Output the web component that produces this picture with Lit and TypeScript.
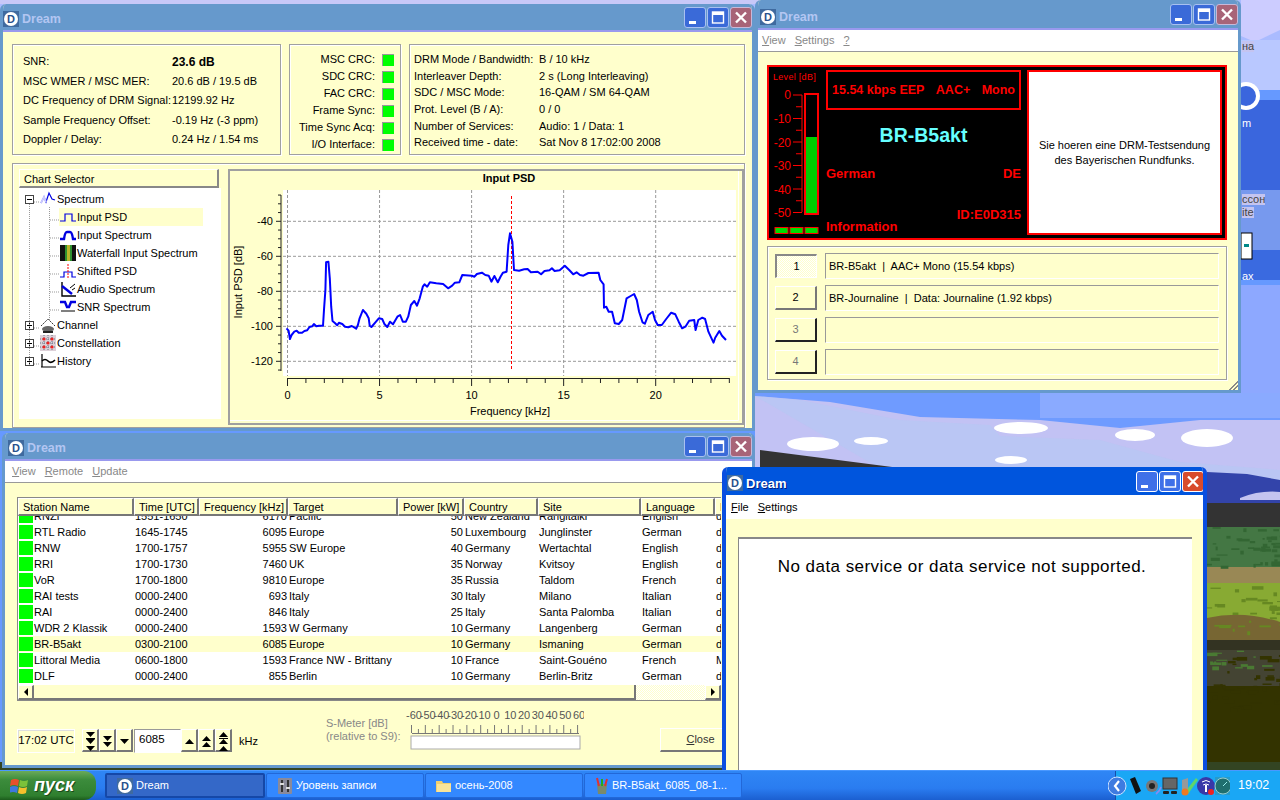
import { LitElement, html, css, svg } from 'lit';
import { customElement } from 'lit/decorators.js';

// spectrum trace, read off the reference in plot pixels
const TRACE = [[182,490],[188,497],[192,522],[197,510],[205,500],[212,497],[218,503],[228,503],[235,498],[243,496],[250,486],[258,484],[263,477],[270,484],[278,482],[290,482],[293,430],[297,375],[299,292],[306,290],[310,340],[314,425],[318,468],[325,474],[332,481],[337,473],[347,477],[355,485],[365,487],[375,483],[388,491],[393,480],[398,460],[408,435],[418,446],[425,460],[428,482],[433,486],[445,472],[455,460],[465,462],[472,478],[480,486],[488,470],[497,478],[510,455],[518,450],[526,470],[535,470],[542,455],[550,420],[560,408],[568,422],[576,400],[585,365],[590,358],[598,365],[606,352],[625,355],[645,357],[660,370],[672,362],[680,353],[693,352],[702,330],[730,332],[738,335],[745,327],[760,323],[770,330],[780,332],[788,350],[797,333],[807,352],[815,335],[822,323],[833,320],[838,240],[843,205],[850,230],[855,315],[870,317],[885,313],[895,312],[905,322],[925,320],[935,328],[945,318],[960,316],[967,310],[975,318],[990,316],[1005,302],[1018,315],[1030,328],[1040,322],[1050,330],[1060,332],[1075,324],[1105,323],[1110,345],[1120,358],[1121,428],[1128,425],[1135,440],[1145,440],[1153,475],[1165,477],[1175,465],[1188,400],[1200,393],[1210,387],[1218,405],[1225,440],[1235,472],[1242,476],[1252,450],[1265,440],[1272,465],[1280,480],[1292,480],[1305,462],[1320,443],[1332,448],[1342,470],[1352,490],[1362,485],[1373,467],[1388,465],[1392,495],[1400,465],[1412,458],[1420,462],[1430,500],[1445,533],[1450,518],[1462,498],[1470,512],[1482,525]];

const STATIONS = [
  ['RNZI', '1551-1650', '6170', 'Pacific', '50', 'New Zealand', 'Rangitaiki', 'English', 'd'],
  ['RTL Radio', '1645-1745', '6095', 'Europe', '50', 'Luxembourg', 'Junglinster', 'German', 'd'],
  ['RNW', '1700-1757', '5955', 'SW Europe', '40', 'Germany', 'Wertachtal', 'English', 'd'],
  ['RRI', '1700-1730', '7460', 'UK', '35', 'Norway', 'Kvitsoy', 'English', 'd'],
  ['VoR', '1700-1800', '9810', 'Europe', '35', 'Russia', 'Taldom', 'French', 'd'],
  ['RAI tests', '0000-2400', '693', 'Italy', '30', 'Italy', 'Milano', 'Italian', 'd'],
  ['RAI', '0000-2400', '846', 'Italy', '25', 'Italy', 'Santa Palomba', 'Italian', 'd'],
  ['WDR 2 Klassik', '0000-2400', '1593', 'W Germany', '10', 'Germany', 'Langenberg', 'German', 'd'],
  ['BR-B5akt', '0300-2100', '6085', 'Europe', '10', 'Germany', 'Ismaning', 'German', 'd'],
  ['Littoral Media', '0600-1800', '1593', 'France NW - Brittany', '10', 'France', 'Saint-Gouéno', 'French', 'M'],
  ['DLF', '0000-2400', '855', 'Berlin', '10', 'Germany', 'Berlin-Britz', 'German', 'd'],
];

const HEADERS = ['Station Name', 'Time [UTC]', 'Frequency [kHz]', 'Target', 'Power [kW]', 'Country', 'Site', 'Language', 'D'];

const logo = () => html`<svg class="logo" width="16" height="16" viewBox="0 0 16 16">
  <rect width="16" height="16" fill="#3f6a9f"/>
  <circle cx="8" cy="8" r="7" fill="#fff"/>
  <text x="8" y="12" text-anchor="middle" font-family="Liberation Sans" font-weight="700" font-size="11" fill="#28508c">D</text>
</svg>`;

const titleBtn = (kind: string) => html`<span class="tb ${kind}">
  <svg width="20" height="19" viewBox="0 0 20 19">
    ${kind === 'min' ? svg`<rect x="4" y="13" width="7" height="3" fill="#fff"/>` : ''}
    ${kind === 'max' ? svg`<rect x="4.5" y="4" width="11" height="11" fill="none" stroke="#fff" stroke-width="1.4"/><rect x="4.5" y="4" width="11" height="3" fill="#fff"/>` : ''}
    ${kind === 'close' ? svg`<path d="M5 4.5l10 10M15 4.5l-10 10" stroke="#fff" stroke-width="2.4"/>` : ''}
  </svg>
</span>`;

const titleBar = () => html`<div class="title">
  ${logo()}<span class="title-text">Dream</span>
  <span class="tbs">${titleBtn('min')}${titleBtn('max')}${titleBtn('close')}</span>
</div>`;

const blue = '#0000e0';
const treeIcons: Record<string, unknown> = {
  spectrum: svg`<path d="M1 12l3-6 2 5 3-9 3 6 3 1" fill="none" stroke="${blue}" stroke-width="1.2"/><path d="M1 12l3-6 2 5" fill="none" stroke="#c9c9ff" stroke-width="2"/>`,
  psd: svg`<path d="M0 12h5v-7h7v7h4" fill="none" stroke="${blue}" stroke-width="1.2"/>`,
  inspec: svg`<path d="M0 12h4q1-7 3-7h3q2 0 3 7h3" fill="none" stroke="${blue}" stroke-width="2.4"/>`,
  waterfall: svg`<rect width="16" height="16" fill="#111"/><rect x="5" y="0" width="7" height="16" fill="#2f8f2f"/><rect x="7" y="0" width="3" height="16" fill="#b9b32a"/>`,
  shifted: svg`<path d="M0 14h4v-5h8v5h4" fill="none" stroke="${blue}" stroke-width="1.2"/><path d="M8 1v15" stroke="#f00" stroke-dasharray="2 1"/>`,
  audio: svg`<path d="M2 1v14h14" fill="none" stroke="#000" stroke-width="1.4"/><path d="M2 5l10 8" stroke="${blue}" stroke-width="2.4"/><path d="M10 7l5-4M12 9l3-2" stroke="#000"/>`,
  snr: svg`<path d="M0 3h5l2 5h2l2-5h5" fill="none" stroke="${blue}" stroke-width="2.4"/><path d="M1 12h14" stroke="#000"/>`,
  channel: svg`<path d="M1 9l7-7 7 7" fill="none" stroke="#333" stroke-dasharray="2 1"/><ellipse cx="8" cy="12" rx="6" ry="3" fill="#666"/><rect x="3" y="14" width="10" height="2" fill="#222"/>`,
  constellation: svg`<rect width="16" height="16" fill="#ddd0d8"/><path d="M0 4h16M0 8h16M0 12h16M4 0v16M8 0v16M12 0v16" stroke="#678" stroke-dasharray="1 1"/><circle cx="4" cy="4" r="1.6" fill="#e22"/><circle cx="12" cy="4" r="1.6" fill="#e22"/><circle cx="4" cy="12" r="1.6" fill="#e22"/><circle cx="12" cy="12" r="1.6" fill="#e22"/><circle cx="8" cy="8" r="1.6" fill="#e22"/>`,
  history: svg`<path d="M2 1v13M1 14h15" fill="none" stroke="#000" stroke-width="1.2"/><path d="M2 8q3-3 6 0t7-1" fill="none" stroke="#000" stroke-width="1.6"/>`,
};

const icon = (name: string) => html`<svg class="ti" width="16" height="16" viewBox="0 0 16 16">${treeIcons[name]}</svg>`;

const expander = (open: boolean) => html`<svg class="exp" width="9" height="9" viewBox="0 0 9 9">
  <rect x=".5" y=".5" width="8" height="8" fill="#fff" stroke="#444"/>
  <path d="M2 4.5h5${open ? '' : 'M4.5 2v5'}" stroke="#000"/>
</svg>`;

const stepBtn = (dir: 'up' | 'down', count: number) => {
  const tri = (y: number) => dir === 'up'
    ? svg`<path d="M3 ${y + 5}h9l-4.5-5z" fill="#000"/>`
    : svg`<path d="M3 ${y}h9l-4.5 5z" fill="#000"/>`;
  const ys = count === 1 ? [9] : count === 2 ? [6, 12] : [2, 9, 16];
  return html`<span class="step"><svg width="15" height="21" viewBox="0 0 15 21">
    ${ys.map(tri)}
    ${count === 3 ? svg`<rect x="3" y="8" width="9" height="1" fill="#000"/>` : ''}
  </svg></span>`;
};

// pixel-noise for the meadow below the hills
function noise(seed: number, n: number, x: number, y: number, w: number, h: number, fill: string) {
  let s = seed;
  const rnd = () => (s = (s * 16807) % 2147483647) / 2147483647;
  const out = [];
  for (let i = 0; i < n; i++) {
    out.push(svg`<rect x="${x + rnd() * w}" y="${y + rnd() * h}" width="${2 + rnd() * 10}" height="${1 + rnd() * 3}" fill="${fill}"/>`);
  }
  return out;
}

@customElement('app-root')
export class AppRoot extends LitElement {
  static styles = css`
    :host {
      display: block;
      position: relative;
      width: 1280px;
      height: 800px;
      overflow: hidden;
      font-family: "Liberation Sans", Arial, sans-serif;
      font-size: 11px;
      color: #000;
      background: #6699ff;
      line-height: 1;
    }
    * { box-sizing: border-box; }
    .wall { position: absolute; inset: 0; }
    .dt-label { position: absolute; left: 1242px; color: #fff; font-size: 11px; }
    .dt-label.light { color: #444; background: #c4c4f0; }

    .win {
      position: absolute;
      display: flex;
      flex-direction: column;
      background: #ffffcc;
      border: 3px solid #6699cc;
      border-top: 0;
      overflow: hidden;
      border-radius: 6px 6px 0 0;
    }
    .title {
      height: 28px;
      flex: none;
      display: flex;
      align-items: center;
      gap: 3px;
      background: #6699cc;
      border-bottom: 2px solid #9999ee;
      margin: 0 -3px;
      padding: 4px 0 0 3px;
      color: #b3c6f2;
    }
    .title-text { font: 700 12.5px "Liberation Sans", sans-serif; }
    .tbs { margin-left: auto; display: flex; gap: 1px; padding-right: 3px; margin-top: -4px; }
    .tb { width: 22px; height: 21px; border: 1px solid #a8c0f0; border-radius: 3px; background: #3a6ad8; display: block; }
    .tb svg { display: block; }
    .tb.close { background: #a86478; border-color: #c8b8d8; }

    .menu {
      height: 22px;
      flex: none;
      background: #fff;
      border-bottom: 1px solid #999;
      display: flex;
      align-items: center;
      gap: 9px;
      color: #888;
    }
    .panel {
      background: #ffffcc;
      border: 1px solid #a0a0a0;
      box-shadow: inset 1px 1px #fff, 1px 1px #fff;
    }

    /* main window */
    .main { left: 0; top: 4px; width: 755px; height: 427px; }
    .main .client { padding: 12px 0 0 9px; display: flex; flex-direction: column; gap: 8px; }
    .top-row { display: flex; gap: 8px; height: 111px; }
    .snr { width: 269px; padding: 11px 0 0 10px; display: grid; grid-template-columns: 149px 1fr; grid-auto-rows: 19.5px; }
    .snr b { font-weight: 700; font-size: 12px; }
    .crc { width: 112px; padding: 6px 6px 0 0; display: grid; grid-template-columns: 1fr 12px; grid-auto-rows: 17px; column-gap: 7px; text-align: right; align-items: center; }
    .led { width: 12px; height: 12px; background: #00ff00; border-top: 1px solid #999; border-left: 1px solid #999; }
    .params { width: 336px; padding: 9px 0 0 4px; display: grid; grid-template-columns: 125px 1fr; grid-auto-rows: 16.7px; }
    .chart-panel { width: 733px; height: 265px; display: flex; gap: 7px; padding: 5px 0 0 6px; }
    .tree-wrap { width: 202px; height: 250px; background: #fff; position: relative; }
    .tree-head {
      height: 19px;
      width: 200px;
      background: #ffffcc;
      border: 1px solid #888;
      border-top-color: #fff;
      border-left-color: #fff;
      border-right-width: 2px;
      border-bottom-width: 2px;
      padding: 4px 0 0 4px;
    }
    .tree-bar { background: #ffffcc; height: 19px; }
    .tree-rows { padding-top: 2px; }
    .tree-row { height: 18px; display: flex; align-items: center; }
    .tree-row .exp { margin: 0 6px 0 6px; }
    .tree-row.child { padding-left: 41px; }
    .tree-row.sel { background: linear-gradient(#ffffcc, #ffffcc) 40px 0 / 144px 100% no-repeat; }
    .ti { flex: none; margin-right: 1px; }
    .guides { position: absolute; left: 0; top: 0; pointer-events: none; }
    .chart-frame { width: 516px; height: 256px; background: #ffffcc; border: 2px solid #a0a0a0; flex: none; overflow: hidden; }
    .chart-frame svg { display: block; }

    /* evaluation window */
    .eval { left: 755px; top: 0; width: 486px; height: 393px; }
    .eval .title { height: 30px; padding: 5px 0 0 5px; }
    .eval .tbs { margin-top: -5px; }
    .eval .menu { padding-left: 4px; }
    .eval .client { padding: 13px 0 0 9px; flex: 1; position: relative; }
    .display {
      width: 460px;
      height: 175px;
      background: #000;
      border: 2px solid #f00;
      display: flex;
      gap: 6px;
      padding: 3px;
      color: #f00;
      font-weight: 700;
    }
    .meter { flex: none; }
    .mid { width: 195px; position: relative; display: flex; flex-direction: column; font-size: 13px; }
    .kbps { height: 40px; border: 2px solid #f00; display: flex; justify-content: space-between; align-items: center; padding: 0 4px; font-size: 12.5px; white-space: pre; }
    .station { text-align: center; color: #66ffff; font-size: 19.5px; margin-top: 16px; }
    .row2 { display: flex; justify-content: space-between; margin-top: 21px; }
    .mid .id { text-align: right; margin-top: 28px; }
    .mid .info { margin-top: -1px; }
    .note { flex: 1; background: #fff; border: 2px solid #f00; color: #000; font-weight: 400; display: flex; align-items: center; justify-content: center; text-align: center; line-height: 15px; }
    .services { margin-top: 6px; width: 460px; height: 134px; padding: 7px 7px 0 7px; display: flex; flex-direction: column; gap: 8px; }
    .svc { display: flex; gap: 8px; height: 24px; }
    .svc-btn { width: 42px; flex: none; display: flex; align-items: center; justify-content: center; background: #ffffcc; border: 1px solid #fff; border-right: 2px solid #777; border-bottom: 2px solid #777; }
    .svc-btn.on { border: 1px solid #fff; border-left: 2px solid #888; border-top: 2px solid #888; background: repeating-conic-gradient(#ffffcc 0 25%, #fff 0 50%) 0 0 / 2px 2px; }
    .svc-btn.off { color: #777; border-right-color: #222; border-bottom-color: #222; }
    .svc-label { flex: 1; border: 1px solid #fff; border-left: 1px solid #999; border-top: 1px solid #999; padding: 0 0 0 3px; display: flex; align-items: center; white-space: pre; margin-top: -1px; height: 26px; }
    .grip { position: absolute; right: 0; bottom: 0; width: 11px; height: 11px; background: repeating-linear-gradient(135deg, #888 0 1px, #ffffcc 1px 3px); clip-path: polygon(100% 0, 100% 100%, 0 100%); }

    /* station list */
    .list { left: 2px; top: 433px; width: 753px; height: 335px; }
    .list .title { padding-left: 6px; }
    .list .menu { padding-left: 7px; }
    .list .client { padding: 14px 0 0 12px; flex: 1; position: relative; }
    .table { width: 704px; height: 204px; border: 1px solid #888; border-right: 0; background: #fff; display: flex; flex-direction: column; overflow: hidden; }
    .thead { display: flex; height: 18px; flex: none; background: #ffffcc; }
    .th { flex: none; border: 1px solid #fff; border-right: 2px solid #777; border-bottom: 2px solid #777; padding: 3px 0 0 4px; white-space: nowrap; overflow: hidden; }
    .tbody { flex: 1; overflow: hidden; }
    .tr { display: flex; height: 16px; align-items: center; white-space: nowrap; }
    .tr.first { margin-top: -8px; }
    .tr.sel { background: #ffffcc; }
    .sq { width: 14px; height: 14px; background: #00ff00; margin: 0 0 0 1px; flex: none; }
    .td { flex: none; padding-left: 1px; overflow: hidden; }
    .td.num { text-align: right; padding-right: 1px; }
    .hbar { height: 16px; flex: none; display: flex; background: #ffffcc; border-top: 1px solid #fff; }
    .hbar .arrow { width: 16px; flex: none; border: 1px solid #fff; border-right: 2px solid #777; border-bottom: 2px solid #777; display: flex; align-items: center; justify-content: center; }
    .hbar .thumb { width: 602px; flex: none; border-right: 2px solid #777; border-bottom: 2px solid #777; }
    .hbar .track { flex: 1; background: repeating-conic-gradient(#ffffcc 0 25%, #fff 0 50%) 0 0 / 2px 2px; }
    .tools { display: flex; align-items: flex-start; margin-top: 18px; }
    .clock { width: 58px; height: 24px; margin-top: 10px; border: 1px solid #fff; display: flex; align-items: center; justify-content: center; box-shadow: inset 1px 1px #ddd; font-size: 11.5px; white-space: nowrap; }
    .steps { display: flex; margin-left: 7px; margin-top: 10px; height: 24px; }
    .steps.right { margin-left: 1px; }
    .step { width: 17px; height: 23px; border: 1px solid #fff; border-right: 2px solid #777; border-bottom: 2px solid #777; display: block; }
    .step svg { display: block; margin: 0; }
    .freq { width: 47px; height: 24px; background: #fff; border: 1px solid #fff; border-left-color: #999; border-top-color: #999; padding: 4px 0 0 4px; font-size: 11.5px; }
    .khz { margin: 17px 0 0 7px; }
    .smeter { margin: -2px 0 0 68px; color: #888; line-height: 13px; width: 78px; white-space: nowrap; }
    .scale { margin-top: -15px; }
    .scale svg { display: block; }
    .close-btn { position: absolute; left: 655px; top: 245px; width: 66px; height: 24px; border: 1px solid #fff; border-right: 0; border-bottom: 2px solid #777; display: flex; align-items: center; justify-content: center; color: #333; padding-left: 14px; }

    /* data window */
    .data { left: 722px; top: 467px; width: 485px; height: 320px; border: 4px solid #0a4ee0; border-top: 0; }
    .data .title { background: #0055dd; border-bottom: 0; margin: 0 -4px; color: #fff; height: 28px; padding-left: 5px; }
    .data .title-text { font-size: 13px; text-shadow: 1px 1px #002080; }
    .data .menu { color: #000; height: 24px; border-bottom: 0; padding-left: 5px; }
    .data .tb { background: #3f70e8; border-color: #fff; }
    .data .tb.close { background: #d84b2c; }
    .data .client { padding: 18px 11px 0 12px; flex: 1; }
    .data-box { background: #fff; height: 300px; border-left: 1px solid #888; border-top: 2px solid #888; text-align: center; padding: 19px 7px 0 0; font-size: 17px; letter-spacing: .45px; white-space: nowrap; }

    /* taskbar */
    .taskbar {
      position: absolute;
      left: 0;
      bottom: 0;
      width: 1280px;
      height: 30px;
      display: flex;
      align-items: stretch;
      background: linear-gradient(#2f86f5 0, #2a7cf0 60%, #1b5fd0 100%);
      border-top: 1px solid #4a98ff;
      color: #fff;
      font-size: 11px;
    }
    .start {
      width: 96px;
      flex: none;
      border-radius: 0 12px 12px 0;
      background: linear-gradient(#6aaa5a, #3c8c3c 30%, #2f7f2f 85%, #1c5c1c);
      display: flex;
      align-items: center;
      gap: 5px;
      padding-left: 10px;
      font: italic 700 18px "Liberation Sans", sans-serif;
      text-shadow: 1px 1px #1a4a1a;
    }
    .tasks { display: flex; gap: 1px; margin-left: 9px; padding: 2px 0; }
    .task { width: 158px; display: flex; align-items: center; gap: 3px; padding-left: 10px; background: #3388ff; border-radius: 2px; border: 1px solid #2268d8; white-space: nowrap; font-size: 11px; }
    .task.on { width: 160px; background: #3468c8; border: 2px solid #1548a8; }
    .tray { margin-left: auto; width: 165px; background: #1aa7f5; display: flex; align-items: center; position: relative; border-left: 1px solid #164ea8; }
    .tray svg { display: block; flex: none; }
    .clocktext { margin-left: 8px; font-size: 12.5px; }
  `;

  private wallpaper() {
    return html`<svg class="wall" width="1280" height="800" viewBox="0 0 1280 800">
      <rect width="1280" height="800" fill="#6699ff"/>
      <path d="M0 0h1280v70h-60l-40-20H0z" fill="#aabbff"/>
      <path d="M0 0h760v4H0z" fill="#c8c8f8"/>
      <path d="M1241 0h39v30l-25 12-14-6z" fill="#ccccff"/>
      <path d="M1241 40h39v50h-39z" fill="#b9c8ff"/>
      <path d="M1241 100h39v90h-39z" fill="#3a66dd"/>
      <path d="M1241 190h39v60h-39z" fill="#7799ee"/>
      <path d="M1241 250h39v30h-39z" fill="#3a6ae0"/>
      <path d="M1241 285h39v110h-39z" fill="#8da8ff"/>
      <path d="M755 393h525v40H755z" fill="#6f9bff"/>
      <path d="M1040 393h240v25h-240z" fill="#8aaaff"/>
      <path d="M755 396L830 402 920 417 1040 420 1120 428 1200 420 1280 420V480H755z" fill="#c2c2f4"/>
      <path d="M755 396L800 400 900 420 990 425 1000 436 1100 440 1180 462 1280 470V480H900z" fill="#b4c8f4" opacity=".6"/>
      <ellipse cx="813" cy="444" rx="26" ry="7" fill="#fff"/>
      <ellipse cx="871" cy="441" rx="17" ry="4" fill="#fff"/>
      <ellipse cx="1021" cy="428" rx="27" ry="6" fill="#fff"/>
      <ellipse cx="1135" cy="435" rx="20" ry="6" fill="#fff"/>
      <ellipse cx="1207" cy="438" rx="26" ry="9" fill="#fff"/>
      <ellipse cx="1011" cy="460" rx="16" ry="4" fill="#fff"/>
      <path d="M760 450l140 18v6H760z" fill="#333"/>
      <path d="M1207 472l40 2 33 6v28h-73z" fill="#3344aa"/>
      <path d="M1240 498q20-8 40-6v8h-40z" fill="#c4c4f0"/>
      <rect x="1207" y="503" width="73" height="24" fill="#333"/>
      <rect x="1207" y="527" width="73" height="40" fill="#447744"/>
      <rect x="1207" y="567" width="73" height="16" fill="#998855"/>
      <rect x="1207" y="583" width="73" height="50" fill="#88aa33"/>
      <path d="M1207 618q36-8 73 4v18h-73z" fill="#776633"/>
      <rect x="1207" y="640" width="73" height="14" fill="#333322"/>
      <rect x="1207" y="650" width="73" height="125" fill="#333300"/>
      <rect x="1207" y="650" width="73" height="36" fill="#444433"/>
      ${noise(7, 40, 1207, 527, 73, 40, '#336633')}
      ${noise(11, 30, 1207, 585, 73, 50, '#668822')}
      ${noise(13, 40, 1207, 650, 73, 60, '#333300')}
      ${noise(17, 14, 1207, 648, 73, 20, '#4a7a33')}
      <rect x="0" y="762" width="1280" height="8" fill="#334422"/>
      <circle cx="1246" cy="96" r="14" fill="#fff"/>
      <circle cx="1246" cy="96" r="10" fill="#3a66dd"/>
      <rect x="1241" y="233" width="11" height="26" fill="#fff" stroke="#000"/>
      <rect x="1244" y="244" width="5" height="3" fill="#008888"/>
    </svg>
    <span class="dt-label light" style="top:41px">на</span>
    <span class="dt-label" style="top:118px">m</span>
    <span class="dt-label light" style="top:194px">ссон</span>
    <span class="dt-label light" style="top:207px">ite</span>
    <span class="dt-label" style="top:271px">ax</span>`;
  }

  private mainWindow() {
    const snr = [
      ['SNR:', html`<b>23.6 dB</b>`],
      ['MSC WMER / MSC MER:', '20.6 dB / 19.5 dB'],
      ['DC Frequency of DRM Signal:', '12199.92 Hz'],
      ['Sample Frequency Offset:', '-0.19 Hz (-3 ppm)'],
      ['Doppler / Delay:', '0.24 Hz / 1.54 ms'],
    ];
    const crc = ['MSC CRC:', 'SDC CRC:', 'FAC CRC:', 'Frame Sync:', 'Time Sync Acq:', 'I/O Interface:'];
    const params = [
      ['DRM Mode / Bandwidth:', 'B / 10 kHz'],
      ['Interleaver Depth:', '2 s (Long Interleaving)'],
      ['SDC / MSC Mode:', '16-QAM / SM 64-QAM'],
      ['Prot. Level (B / A):', '0 / 0'],
      ['Number of Services:', 'Audio: 1 / Data: 1'],
      ['Received time - date:', 'Sat Nov 8 17:02:00 2008'],
    ];
    return html`<section class="win main">
      ${titleBar()}
      <div class="client">
        <div class="top-row">
          <div class="panel snr">${snr.map(([a, b]) => html`<span>${a}</span><span>${b}</span>`)}</div>
          <div class="panel crc">${crc.map((t) => html`<span>${t}</span><i class="led"></i>`)}</div>
          <div class="panel params">${params.map(([a, b]) => html`<span>${a}</span><span>${b}</span>`)}</div>
        </div>
        <div class="panel chart-panel">
          ${this.tree()}
          <div class="chart-frame">${this.chart()}</div>
        </div>
      </div>
    </section>`;
  }

  private tree() {
    const children = [
      ['psd', 'Input PSD', true],
      ['inspec', 'Input Spectrum', false],
      ['waterfall', 'Waterfall Input Spectrum', false],
      ['shifted', 'Shifted PSD', false],
      ['audio', 'Audio Spectrum', false],
      ['snr', 'SNR Spectrum', false],
    ] as const;
    return html`<div class="tree-wrap">
      <div class="tree-bar"><div class="tree-head">Chart Selector</div></div>
      <div class="tree-rows">
        <div class="tree-row">${expander(true)}${icon('spectrum')}Spectrum</div>
        ${children.map(([i, t, s]) => html`<div class="tree-row child ${s ? 'sel' : ''}">${icon(i)}${t}</div>`)}
        <div class="tree-row">${expander(false)}${icon('channel')}Channel</div>
        <div class="tree-row">${expander(false)}${icon('constellation')}Constellation</div>
        <div class="tree-row">${expander(false)}${icon('history')}History</div>
      </div>
      <svg class="guides" width="202" height="250">
        <path d="M10.5 35v162M30.5 38v113M31 51h9M31 69h9M31 87h9M31 105h9M31 123h9M31 141h9M15 159h6M15 177h6M15 195h6M15 33h6" stroke="#999" stroke-dasharray="1 1" fill="none"/>
      </svg>
    </div>`;
  }

  private chart() {
    const pts = TRACE.map(([x, y]) => `${(x / 2.958 + 225).toFixed(1)},${(y / 3 + 165).toFixed(1)}`).join(' ');
    const kHz = (v: number) => 287.5 + v * 18.41;
    const dB = (v: number) => 221.3 + (-40 - v) * 1.75;
    const yMajor = [-40, -60, -80, -100, -120];
    const yMinor: number[] = [];
    for (let v = -25; v >= -125; v -= 5) yMinor.push(v);
    const xTicks: number[] = [];
    for (let v = 0; v <= 24; v++) xTicks.push(v);
    return svg`<svg width="512" height="252" viewBox="230 171 512 252" font-family="Liberation Sans" font-size="11" fill="#000">
      <rect x="283" y="190" width="453" height="186" fill="#fff"/>
      ${[0, 5, 10, 15, 20].map((v) => svg`<path d="M${kHz(v)} 190V376" stroke="#999" stroke-dasharray="3 2"/>`)}
      ${yMajor.map((v) => svg`<path d="M283 ${dB(v)}H736" stroke="#999" stroke-dasharray="3 2"/>`)}
      <path d="M511.5 196V371" stroke="#f00" stroke-dasharray="3 2"/>
      <polyline points="${pts}" fill="none" stroke="#0000ff" stroke-width="2" stroke-linejoin="round"/>
      <path d="M281 195V371" stroke="#222"/>
      ${yMinor.map((v) => svg`<path d="M${yMajor.includes(v) ? 276 : 278} ${dB(v)}H281" stroke="#222"/>`)}
      ${yMajor.map((v) => svg`<text x="273" y="${dB(v) + 4}" text-anchor="end">${v}</text>`)}
      <path d="M${kHz(0)} 378.5H${kHz(24)}" stroke="#222"/>
      ${xTicks.map((v) => svg`<path d="M${kHz(v)} 378V${v % 5 === 0 ? 386 : 383}" stroke="#222"/>`)}
      ${[0, 5, 10, 15, 20].map((v) => svg`<text x="${kHz(v)}" y="399" text-anchor="middle">${v}</text>`)}
      <text x="509" y="182" text-anchor="middle" font-weight="700">Input PSD</text>
      <text x="510" y="415" text-anchor="middle">Frequency [kHz]</text>
      <text transform="translate(242 282) rotate(-90)" text-anchor="middle">Input PSD [dB]</text>
      <path d="M738.5 171V420.5H230" fill="none" stroke="#fff"/>
    </svg>`;
  }

  private meter() {
    const labels = [['0', 94], ['-10', 118], ['-20', 142], ['-30', 165], ['-40', 189], ['-50', 212]] as const;
    const ticks: number[] = [];
    for (let i = 0; i <= 10; i++) ticks.push(95 + i * 11.75);
    return svg`<svg class="meter" width="48" height="167" viewBox="772 70 48 167" font-family="Liberation Sans" fill="#f00">
      <text x="773" y="80" font-size="9" font-weight="400" letter-spacing=".3">Level [dB]</text>
      ${labels.map(([t, y]) => svg`<text x="791" y="${y + 5}" font-size="12" font-weight="400" text-anchor="end">${t}</text>`)}
      ${ticks.map((y, i) => svg`<path d="M${i % 2 ? 796 : 793} ${y}H802" stroke="#f00"/>`)}
      <path d="M802 95V212" stroke="#f00"/>
      <rect x="805" y="94" width="13" height="120" fill="none" stroke="#f00" stroke-width="2"/>
      <rect x="806" y="137" width="11" height="76" fill="#00cc00"/>
      ${[775, 790, 805].map((x) => svg`<rect x="${x}" y="227.5" width="13" height="6" fill="#00dd00" stroke="#f00"/>`)}
    </svg>`;
  }

  private evalWindow() {
    return html`<section class="win eval">
      ${titleBar()}
      <div class="menu"><span><u>V</u>iew</span><span><u>S</u>ettings</span><span><u>?</u></span></div>
      <div class="client">
        <div class="display">
          ${this.meter()}
          <div class="mid">
            <div class="kbps"><span>15.54 kbps EEP</span><span>AAC+</span><span>Mono</span></div>
            <div class="station">BR-B5akt</div>
            <div class="row2"><span>German</span><span>DE</span></div>
            <div class="id">ID:E0D315</div>
            <div class="info">Information</div>
          </div>
          <div class="note"><span>Sie hoeren eine DRM-Testsendung<br>des Bayerischen Rundfunks.</span></div>
        </div>
        <div class="panel services">
          <div class="svc"><span class="svc-btn on">1</span><span class="svc-label">BR-B5akt  |  AAC+ Mono (15.54 kbps)</span></div>
          <div class="svc"><span class="svc-btn">2</span><span class="svc-label">BR-Journaline  |  Data: Journaline (1.92 kbps)</span></div>
          <div class="svc"><span class="svc-btn off">3</span><span class="svc-label"></span></div>
          <div class="svc"><span class="svc-btn off">4</span><span class="svc-label"></span></div>
        </div>
        <i class="grip"></i>
      </div>
    </section>`;
  }

  private listWindow() {
    const widths = [116, 65, 89, 110, 66, 74, 103, 74, 20];
    const ticks: number[] = [];
    for (let i = 0; i <= 24; i++) ticks.push(412.5 + i * 6.92);
    const scale = ['-60', '-50', '-40', '-30', '-20', '-10', '0', '10', '20', '30', '40', '50', '60'];
    return html`<section class="win list">
      ${titleBar()}
      <div class="menu"><span><u>V</u>iew</span><span><u>R</u>emote</span><span><u>U</u>pdate</span></div>
      <div class="client">
        <div class="table">
          <div class="thead">${HEADERS.map((h, i) => html`<span class="th" style="width:${widths[i]}px">${h}</span>`)}</div>
          <div class="tbody">
            ${STATIONS.map((r, n) => html`<div class="tr ${n === 0 ? 'first' : ''} ${r[0] === 'BR-B5akt' ? 'sel' : ''}">
              <i class="sq"></i>
              ${r.map((c, i) => {
                const w = i === 0 ? widths[0] - 15 : widths[i];
                const num = i === 2 || i === 4;
                return html`<span class="td ${num ? 'num' : ''}" style="width:${w}px">${c}</span>`;
              })}
            </div>`)}
          </div>
          <div class="hbar">
            <span class="arrow"><svg width="6" height="8"><path d="M5 0v8L1 4z" fill="#000"/></svg></span>
            <span class="thumb"></span>
            <span class="track"></span>
            <span class="arrow"><svg width="6" height="8"><path d="M1 0v8l4-4z" fill="#000"/></svg></span>
          </div>
        </div>
        <div class="tools">
          <span class="clock">17:02 UTC</span>
          <span class="steps">${stepBtn('down', 3)}${stepBtn('down', 2)}${stepBtn('down', 1)}</span>
          <span class="steps right"><span class="freq">6085</span>${stepBtn('up', 1)}${stepBtn('up', 2)}${stepBtn('up', 3)}</span>
          <span class="khz">kHz</span>
          <span class="smeter">S-Meter [dB]<br>(relative to S9):</span>
          <div class="scale">
            <svg width="180" height="48" viewBox="405 704 180 48" font-family="Liberation Sans" font-size="11" fill="#555">
              ${scale.map((t, i) => svg`<text x="${415 + i * 13.75}" y="719" text-anchor="middle">${t}</text>`)}
              <path d="M413 733.5H580" stroke="#777"/>
              ${ticks.map((x, i) => svg`<path d="M${x} 733V${i % 2 ? 729 : 725}" stroke="#777"/>`)}
              <rect x="412" y="736" width="169" height="13" fill="#fff" stroke="#aaa"/>
            </svg>
          </div>
        </div>
        <span class="close-btn"><span><u>C</u>lose</span></span>
      </div>
    </section>`;
  }

  private dataWindow() {
    return html`<section class="win data">
      ${titleBar()}
      <div class="menu"><span><u>F</u>ile</span><span><u>S</u>ettings</span></div>
      <div class="client">
        <div class="data-box">No data service or data service not supported.</div>
      </div>
    </section>`;
  }

  private taskbar() {
    return html`<footer class="taskbar">
      <div class="start">
        <svg width="19" height="18" viewBox="0 0 19 18">
          <path d="M1 3q4-2 8 0l-1 6q-4-2-8 0z" fill="#e8502c"/>
          <path d="M10 3q4 2 8 0l-1 6q-4 2-8 0z" fill="#7cc23a"/>
          <path d="M0 10q4-2 8 0l-1 6q-4-2-8 0z" fill="#3f78e0"/>
          <path d="M9 10q4 2 8 0l-1 6q-4 2-8 0z" fill="#f5c02c"/>
        </svg>
        <span>пуск</span>
      </div>
      <div class="tasks">
        <div class="task on">${logo()}<span>Dream</span></div>
        <div class="task"><svg width="16" height="18" viewBox="0 0 16 18"><rect x="1" y="1" width="14" height="16" rx="1" fill="#8a8a9a"/><path d="M5 3v12M11 3v12" stroke="#333" stroke-width="2"/><rect x="3" y="6" width="4" height="2" fill="#ddd"/><rect x="9" y="10" width="4" height="2" fill="#ddd"/></svg><span>Уровень записи</span></div>
        <div class="task"><svg width="16" height="14" viewBox="0 0 16 14"><path d="M0 2h6l1 2h8v9H0z" fill="#f0cf70"/><path d="M1 5h14v8H1z" fill="#f9e49a"/></svg><span>осень-2008</span></div>
        <div class="task"><svg width="14" height="18" viewBox="0 0 14 18"><path d="M2 7h10l-1 10H3z" fill="#7a8a6a"/><path d="M4 9L2 1M7 9V2M10 9l2-7" stroke="#d33" stroke-width="2"/><path d="M7 9V2" stroke="#2a2" stroke-width="2"/></svg><span>BR-B5akt_6085_08-1...</span></div>
      </div>
      <div class="tray">
        <svg width="122" height="24" viewBox="0 0 122 24" style="margin-left:-8px">
          <circle cx="9" cy="12" r="9" fill="#3e7be0" stroke="#cfe4ff"/>
          <path d="M11 7l-4 5 4 5" fill="none" stroke="#fff" stroke-width="2.2"/>
          <path d="M22 5l5-2 6 14-5 3z" fill="#111"/>
          <circle cx="44" cy="12" r="6" fill="#777"/><circle cx="44" cy="12" r="3" fill="#222"/><path d="M48 20q4-3 5-7" stroke="#8a8af0" stroke-width="1.6" fill="none"/>
          <rect x="55" y="4" width="14" height="11" fill="#666" stroke="#333"/><rect x="55" y="17" width="6" height="3" rx="1" fill="#222"/><rect x="63" y="17" width="6" height="3" rx="1" fill="#222"/>
          <path d="M74 6l6-2v16h-6z" fill="#999"/><path d="M80 14l8-10 2 2-10 14z" fill="#5fd66a"/><circle cx="77" cy="18" r="3.5" fill="#ee7a22"/>
          <circle cx="98" cy="12" r="9" fill="#3838a8"/><path d="M94 8q4-3 8 0M95 11q3-2 6 0" stroke="#fff" fill="none"/><rect x="97" y="11" width="2" height="7" fill="#fff"/><circle cx="103" cy="18" r="3" fill="#e22"/>
          <rect x="107" y="3" width="16" height="18" fill="#3a8a8a" opacity=".4"/><circle cx="115" cy="12" r="8" fill="#1f6f6f" stroke="#9cc"/><path d="M115 12l4-4" stroke="#9ee"/>
        </svg>
        <span class="clocktext">19:02</span>
      </div>
    </footer>`;
  }

  render() {
    return html`
      ${this.wallpaper()}
      ${this.evalWindow()}
      ${this.mainWindow()}
      ${this.listWindow()}
      ${this.dataWindow()}
      ${this.taskbar()}
    `;
  }
}
